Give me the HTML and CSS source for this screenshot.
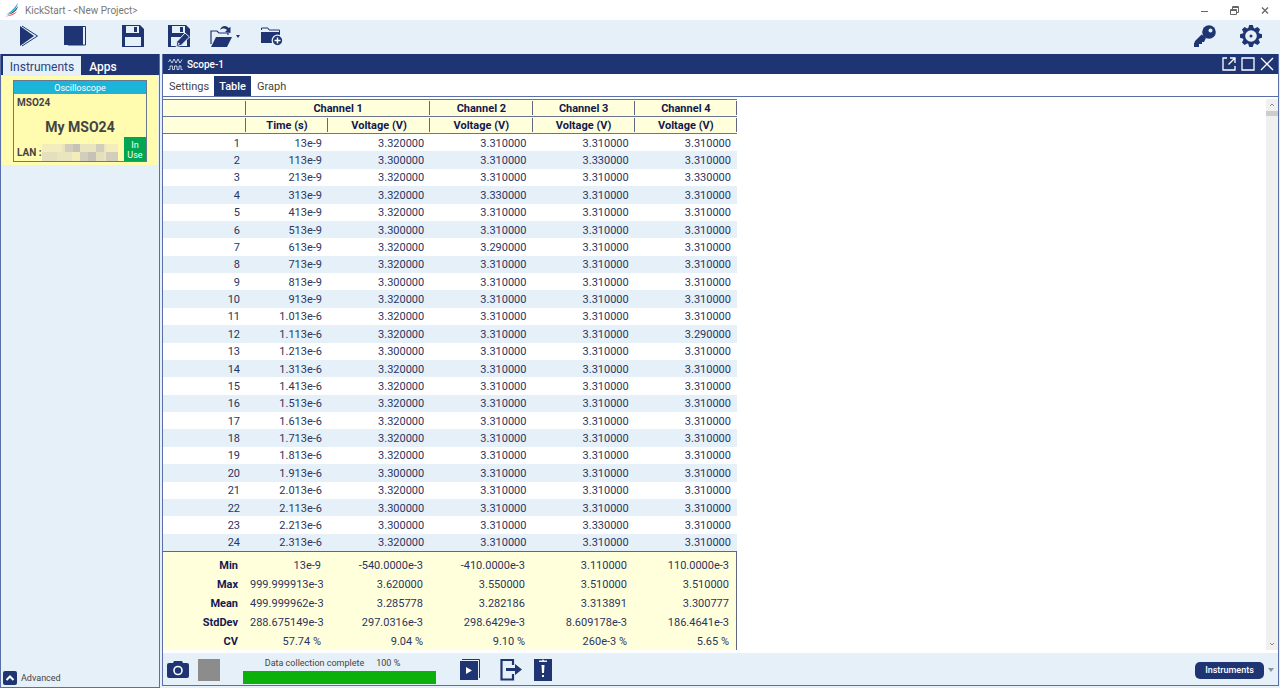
FILE: index.html
```html
<!DOCTYPE html>
<html lang="en">
<head>
    <meta charset="UTF-8">
    <meta name="viewport" content="width=device-width, initial-scale=1.0">
    <title>KickStart - &lt;New Project&gt;</title>
    <link rel="stylesheet" href="styles.css">
</head>
<body>

<header class="titlebar">
    <svg class="logo" width="14" height="14" viewBox="0 0 14 14"><path d="M13 0C12 5 8 10 2 11C7 8 9 5 13 0Z" fill="#27b4dc"/><path d="M13 3C12 8 8 11 0 12.500C6 10.500 10 8 13 3Z" fill="#26314a"/><path d="M12 8C10 12 6 13 0 13.500C5 12 9 11 12 8Z" fill="#e8504c"/></svg>
    <span class="title">KickStart - &lt;New Project&gt;</span>
    <div class="window-buttons">
        <button aria-label="Minimize"><svg width="10" height="10" viewBox="0 0 10 10"><path d="M1 6.500H8" stroke="#666" stroke-width="1"/></svg></button>
        <button aria-label="Restore"><svg width="10" height="10" viewBox="0 0 10 10" fill="none" stroke="#666"><path d="M0.500 4.500H6.500V9.500H0.500ZM0 5.500H7M2.500 4V1.500H8.500V7.500H7M2 2.500H9"/></svg></button>
        <button aria-label="Close"><svg width="10" height="10" viewBox="0 0 10 10"><path d="M2 2.500L8 8.500M8 2.500L2 8.500" stroke="#666" stroke-width="1.300"/></svg></button>
    </div>
</header>

<nav class="toolbar">
    <button class="tool play" aria-label="Run"><svg width="22" height="22" viewBox="0 0 22 22"><path d="M2 1L16 11L2 21Z" fill="#1f3473"/><path d="M4 1L19.500 11L4 21" fill="none" stroke="#1f3473" stroke-width="1"/></svg></button>
    <button class="tool stop" aria-label="Stop"><svg width="22" height="22" viewBox="0 0 22 22"><path d="M0 1H19V20H0Z" fill="#1f3473"/><path d="M2 1.500H21.500V20H4" fill="none" stroke="#1f3473" stroke-width="1"/></svg></button>
    <button class="tool save" aria-label="Save"><svg width="22" height="22" viewBox="0 0 22 22"><path fill-rule="evenodd" d="M0 0H18L22 4V22H0ZM4 1V8H17V1ZM3 12V21H19V12Z" fill="#1f3473"/><path d="M12 2H15V7H12Z" fill="#1f3473"/></svg></button>
    <button class="tool save-as" aria-label="Save as"><svg width="22" height="22" viewBox="0 0 22 22"><path fill-rule="evenodd" d="M0 0H18L22 4V22H0ZM4 1V8H17V1ZM3 12V21H19V12Z" fill="#1f3473"/><path d="M12 2H15V7H12Z" fill="#1f3473"/><path d="M8 21.500L9 16.500L17 8L21.500 12L13 20.500Z" fill="#1f3473" stroke="#e5f0f9"/><path d="M9.500 20L10.500 17.500L12 19Z" fill="#e5f0f9"/></svg></button>
    <button class="tool open" aria-label="Open"><svg width="30" height="22" viewBox="0 0 30 22"><path d="M1 19V6H7L9 8H18V10" fill="none" stroke="#1f3473" stroke-width="1.200"/><path d="M6 12H22L17 22H1Z" fill="#1f3473"/><path d="M10 5C11 0 17 0 18.500 3L20.500 2V8L15 7L17 5C15 3 12 3 10 5Z" fill="#1f3473"/><path d="M26 10H30L28 13Z" fill="#1f3473"/></svg></button>
    <button class="tool add-folder" aria-label="Add folder"><svg width="24" height="22" viewBox="0 0 24 22"><path d="M1.500 5V3H8L9 5H19.500V7" fill="none" stroke="#1f3473"/><path d="M1 7H20V18H1Z" fill="#1f3473"/><circle cx="17.500" cy="15.500" r="5.300" fill="#1f3473" stroke="#e5f0f9" stroke-width="1.300"/><path d="M14.500 15.500H20.500M17.500 12.500V18.500" stroke="#fff" stroke-width="1.500"/></svg></button>
    <button class="tool key" aria-label="License"><svg width="22" height="22" viewBox="0 0 22 22"><path d="M9 11L2 18" stroke="#1f3473" stroke-width="4"/><path d="M0 18V22H5V19H8V17H10L12 13L9 10Z" fill="#1f3473"/><circle cx="15" cy="7" r="6.800" fill="#1f3473"/><circle cx="16.500" cy="5.500" r="2" fill="#e5f0f9"/></svg></button>
    <button class="tool gear" aria-label="Options"><svg width="22" height="22" viewBox="-11 -11 22 22"><g fill="#1f3473"><circle r="8.300"/><path d="M-3 -7L-1.800 -11H1.800L3 -7V7L1.800 11H-1.800L-3 7ZM-7 -3L-11 -1.800V1.800L-7 3H7L11 1.800V-1.800L7 -3Z"/><path d="M-3 -7L-1.800 -11H1.800L3 -7V7L1.800 11H-1.800L-3 7ZM-7 -3L-11 -1.800V1.800L-7 3H7L11 1.800V-1.800L7 -3Z" transform="rotate(45)"/></g><circle r="5.800" fill="#e5f0f9"/><circle r="1.500" fill="#1f3473"/></svg></button>
</nav>

<main class="workspace">
    <aside class="sidebar">
        <div class="side-tabs">
            <button class="side-tab active">Instruments</button>
            <button class="side-tab">Apps</button>
        </div>
        <div class="instrument-slot">
            <div class="instrument">
                <div class="kind">Oscilloscope</div>
                <div class="model">MSO24</div>
                <div class="name">My MSO24</div>
                <div class="connection">
                    <span>LAN :</span>
                    <svg class="address" width="76" height="17" viewBox="0 0 76 17"><path d="M0 0H76V17H0Z" fill="#e9e5bf"/><path d="M0 0H20V8H0ZM30 8H38V17H30ZM64 0H76V8H64Z" fill="#f2edbb"/><path d="M23 0H31V8H23ZM38 8H46V17H38ZM54 0H62V8H54ZM64 8H76V17H64Z" fill="#d2cebb"/><path d="M31 0H38V8H31ZM46 8H54V17H46Z" fill="#c6c2b6"/><path d="M0 8H15V17H0ZM54 8H62V17H54Z" fill="#e4e0bd"/></svg>
                    <span class="in-use">In Use</span>
                </div>
            </div>
        </div>
        <div class="advanced">
            <button aria-label="Expand advanced" id="advanced"><svg width="14" height="14" viewBox="0 0 14 14"><path d="M3.500 9L7 5.500L10.500 9" fill="none" stroke="#fff" stroke-width="2"/></svg></button>
            <label for="advanced">Advanced</label>
        </div>
    </aside>

    <section class="scope">
        <div class="scope-header">
            <svg width="15" height="13" viewBox="0 0 15 13" fill="none" stroke="#e5f0f9" stroke-width="0.800"><path d="M0.500 4L2 1.500L4 5L6 1L8 5L10 1L12 5L14 1.500"/><path d="M0 11.500H2V8H4.500V11.500H6.500V8H9V11.500H11V8H13V11.500H14.500"/></svg>
            <h1>Scope-1</h1>
            <div class="scope-buttons">
                <button aria-label="Pop out"><svg width="14" height="14" viewBox="0 0 14 14" fill="none" stroke="#fff" stroke-width="1.300"><path d="M5 1H1V13H13V9M8 1H13V6M13 1L6.500 7.500"/></svg></button>
                <button aria-label="Maximize"><svg width="14" height="14" viewBox="0 0 14 14"><path d="M1 1H13V13H1Z" fill="none" stroke="#fff" stroke-width="1.300"/></svg></button>
                <button aria-label="Close scope"><svg width="14" height="14" viewBox="0 0 14 14"><path d="M1 1L13 13M13 1L1 13" stroke="#fff" stroke-width="1.300"/></svg></button>
            </div>
        </div>
        <div class="view-tabs">
            <button class="view-tab">Settings</button>
            <button class="view-tab active">Table</button>
            <button class="view-tab">Graph</button>
        </div>

        <div class="content">
            <div class="tables">
                <div class="readings-wrap">
                <table class="readings">
                    <colgroup><col class="c-index"><col class="c-time"><col class="c-volt"><col class="c-volt"><col class="c-volt"><col class="c-volt"></colgroup>
                    <thead>
                        <tr><th></th><th colspan="2">Channel 1</th><th>Channel 2</th><th>Channel 3</th><th>Channel 4</th></tr>
                        <tr><th></th><th>Time (s)</th><th>Voltage (V)</th><th>Voltage (V)</th><th>Voltage (V)</th><th>Voltage (V)</th></tr>
                    </thead>
                    <tbody>
                        <tr><td>1</td><td>13e-9</td><td>3.320000</td><td>3.310000</td><td>3.310000</td><td>3.310000</td></tr>
                        <tr><td>2</td><td>113e-9</td><td>3.300000</td><td>3.310000</td><td>3.330000</td><td>3.310000</td></tr>
                        <tr><td>3</td><td>213e-9</td><td>3.320000</td><td>3.310000</td><td>3.310000</td><td>3.330000</td></tr>
                        <tr><td>4</td><td>313e-9</td><td>3.320000</td><td>3.330000</td><td>3.310000</td><td>3.310000</td></tr>
                        <tr><td>5</td><td>413e-9</td><td>3.320000</td><td>3.310000</td><td>3.310000</td><td>3.310000</td></tr>
                        <tr><td>6</td><td>513e-9</td><td>3.300000</td><td>3.310000</td><td>3.310000</td><td>3.310000</td></tr>
                        <tr><td>7</td><td>613e-9</td><td>3.320000</td><td>3.290000</td><td>3.310000</td><td>3.310000</td></tr>
                        <tr><td>8</td><td>713e-9</td><td>3.320000</td><td>3.310000</td><td>3.310000</td><td>3.310000</td></tr>
                        <tr><td>9</td><td>813e-9</td><td>3.300000</td><td>3.310000</td><td>3.310000</td><td>3.310000</td></tr>
                        <tr><td>10</td><td>913e-9</td><td>3.320000</td><td>3.310000</td><td>3.310000</td><td>3.310000</td></tr>
                        <tr><td>11</td><td>1.013e-6</td><td>3.320000</td><td>3.310000</td><td>3.310000</td><td>3.310000</td></tr>
                        <tr><td>12</td><td>1.113e-6</td><td>3.320000</td><td>3.310000</td><td>3.310000</td><td>3.290000</td></tr>
                        <tr><td>13</td><td>1.213e-6</td><td>3.300000</td><td>3.310000</td><td>3.310000</td><td>3.310000</td></tr>
                        <tr><td>14</td><td>1.313e-6</td><td>3.320000</td><td>3.310000</td><td>3.310000</td><td>3.310000</td></tr>
                        <tr><td>15</td><td>1.413e-6</td><td>3.320000</td><td>3.310000</td><td>3.310000</td><td>3.310000</td></tr>
                        <tr><td>16</td><td>1.513e-6</td><td>3.320000</td><td>3.310000</td><td>3.310000</td><td>3.310000</td></tr>
                        <tr><td>17</td><td>1.613e-6</td><td>3.320000</td><td>3.310000</td><td>3.310000</td><td>3.310000</td></tr>
                        <tr><td>18</td><td>1.713e-6</td><td>3.320000</td><td>3.310000</td><td>3.310000</td><td>3.310000</td></tr>
                        <tr><td>19</td><td>1.813e-6</td><td>3.320000</td><td>3.310000</td><td>3.310000</td><td>3.310000</td></tr>
                        <tr><td>20</td><td>1.913e-6</td><td>3.300000</td><td>3.310000</td><td>3.310000</td><td>3.310000</td></tr>
                        <tr><td>21</td><td>2.013e-6</td><td>3.320000</td><td>3.310000</td><td>3.310000</td><td>3.310000</td></tr>
                        <tr><td>22</td><td>2.113e-6</td><td>3.300000</td><td>3.310000</td><td>3.310000</td><td>3.310000</td></tr>
                        <tr><td>23</td><td>2.213e-6</td><td>3.300000</td><td>3.310000</td><td>3.330000</td><td>3.310000</td></tr>
                        <tr><td>24</td><td>2.313e-6</td><td>3.320000</td><td>3.310000</td><td>3.310000</td><td>3.310000</td></tr>
                    </tbody>
                </table>
                </div>
                <div class="stats-wrap">
                    <table class="stats">
                        <colgroup><col class="c-index"><col class="c-time"><col class="c-volt"><col class="c-volt"><col class="c-volt"><col class="c-volt"></colgroup>
                        <tbody>
                            <tr><th>Min</th><td>13e-9</td><td>-540.0000e-3</td><td>-410.0000e-3</td><td>3.110000</td><td>110.0000e-3</td></tr>
                            <tr><th>Max</th><td>999.999913e-3</td><td>3.620000</td><td>3.550000</td><td>3.510000</td><td>3.510000</td></tr>
                            <tr><th>Mean</th><td>499.999962e-3</td><td>3.285778</td><td>3.282186</td><td>3.313891</td><td>3.300777</td></tr>
                            <tr><th>StdDev</th><td>288.675149e-3</td><td>297.0316e-3</td><td>298.6429e-3</td><td>8.609178e-3</td><td>186.4641e-3</td></tr>
                            <tr><th>CV</th><td>57.74 %</td><td>9.04 %</td><td>9.10 %</td><td>260e-3 %</td><td>5.65 %</td></tr>
                        </tbody>
                    </table>
                </div>
            </div>
            <div class="scrollbar">
                <button aria-label="Scroll up"><svg width="8" height="8" viewBox="0 0 8 8"><path d="M2 5L4 3L6 5" fill="none" stroke="#888"/></svg></button>
                <div class="thumb"></div>
                <button class="down" aria-label="Scroll down"><svg width="8" height="8" viewBox="0 0 8 8"><path d="M2 3L4 5L6 3" fill="none" stroke="#888"/></svg></button>
            </div>
        </div>

        <footer class="statusbar">
            <button class="camera" aria-label="Screenshot"><svg width="22" height="20" viewBox="0 0 22 20"><path d="M2 3H6L7 1H15L16 3H20Q22 3 22 5V16Q22 18 20 18H2Q0 18 0 16V5Q0 3 2 3Z" fill="#1f3473"/><circle cx="11" cy="10.500" r="4" fill="none" stroke="#fff" stroke-width="1.600"/></svg></button>
            <button class="swatch" aria-label="Stop collection"></button>
            <div class="progress">
                <div class="progress-text"><span>Data collection complete</span><span>100 %</span></div>
                <div class="progress-bar"></div>
            </div>
            <button class="playback" aria-label="Playback"><svg width="22" height="24" viewBox="0 0 22 24"><path d="M0 3H18V22H0Z" fill="#1f3473"/><path d="M2 1.500H19.500V20" fill="none" stroke="#1f3473"/><path d="M6 9L12 12.500L6 16Z" fill="#fff"/></svg></button>
            <button class="export" aria-label="Export"><svg width="22" height="24" viewBox="0 0 22 24"><path d="M13 7V2H1.500V21.500H13V16" fill="none" stroke="#1f3473" stroke-width="2.200"/><path d="M6 10H15V6L22 11.500L15 17V13H6Z" fill="#1f3473"/></svg></button>
            <button class="log" aria-label="Event log"><svg width="18" height="24" viewBox="0 0 18 24"><path d="M0 1H18V23H0Z" fill="#1f3473"/><path d="M5 4V2.500H8L9 1L10 2.500H13V4Z" fill="#e5f0f9"/><path d="M7.500 7H10.500L10 15H8ZM8 17H10V19H8Z" fill="#fff"/></svg></button>
            <button class="instruments-button">Instruments</button>
            <button class="more" aria-label="More"><svg width="6" height="6" viewBox="0 0 6 6"><path d="M0 1H6L3 5Z" fill="#8d939c"/></svg></button>
        </footer>
    </section>
</main>

</body>
</html>
```
FILE: styles.css
```css
* { box-sizing: border-box; }
body {
    margin: 0;
    height: 100vh;
    display: flex;
    flex-direction: column;
    background: #e5f0f9;
    color: #444;
    font-family: Roboto, sans-serif;
    font-size: 11px;
}
button {
    padding: 0;
    border: none;
    background: none;
    font-family: inherit;
    font-size: inherit;
    color: inherit;
    cursor: pointer;
}
svg { display: block; }

.titlebar {
    height: 20px;
    display: flex;
    align-items: center;
    background: #fff;
    padding: 0 10px 0 5px;
}
.title { margin-left: 6px; font-size: 10px; color: #777; }
.window-buttons { display: flex; gap: 20px; margin-left: auto; }

.toolbar {
    height: 34px;
    display: flex;
    align-items: center;
    padding: 0 18px 2px;
}
.stop { margin-left: 24px; }
.save { margin-left: 36px; }
.save-as { margin-left: 24px; }
.open { margin-left: 20px; }
.add-folder { margin-left: 20px; }
.key { margin-left: auto; }
.gear { margin-left: 24px; }

.workspace {
    flex: 1;
    min-height: 0;
    display: flex;
    gap: 2px;
    padding-right: 1px;
}

.sidebar {
    width: 160px;
    display: flex;
    flex-direction: column;
    border: 1px solid #5a6ea8;
    border-top: none;
}
.side-tabs {
    height: 21px;
    display: flex;
    background: #1f3473;
    padding: 2px 0 0 2px;
}
.side-tab {
    width: 78px;
    padding-top: 2px;
    font-size: 12px;
    color: #fff;
}
.side-tab + .side-tab { width: 44px; font-weight: 500; }
.side-tab.active { background: #e5f0f9; color: #2d4180; }
.instrument-slot {
    background: #fffcb0;
    margin: 1px 1px 0;
    padding: 4px 11px 3px;
}
.instrument { border: 1px solid #66798f; }
.kind {
    height: 13px;
    line-height: 14px;
    background: #1cb4d8;
    color: #fff;
    font-size: 9px;
    text-align: center;
}
.model { padding: 3px 3px 0; font-size: 10px; font-weight: 700; line-height: 12px; }
.name { padding-top: 8px; font-size: 14px; font-weight: 700; line-height: 20px; text-align: center; }
.connection {
    height: 24px;
    display: flex;
    align-items: flex-end;
    padding-left: 3px;
    font-size: 10px;
    font-weight: 700;
    line-height: 16px;
}
.in-use {
    width: 22px;
    height: 24px;
    margin-left: auto;
    padding-top: 3px;
    background: #00a651;
    color: #fff;
    font-size: 9px;
    font-weight: 400;
    line-height: 10px;
    text-align: center;
}
.advanced {
    margin-top: auto;
    display: flex;
    align-items: center;
    gap: 4px;
    padding: 0 0 2px 2px;
    font-size: 9px;
}
.advanced button { background: #1f3473; border-radius: 2px; }

.scope {
    flex: 1;
    min-width: 0;
    display: flex;
    flex-direction: column;
    margin-bottom: 2px;
    background: #fff;
    border: 1px solid #5a6ea8;
    border-top: none;
}
.scope-header {
    height: 20px;
    display: flex;
    align-items: center;
    gap: 4px;
    padding: 0 4px 0 5px;
    background: #1f3473;
    color: #fff;
}
.scope-header h1 { margin: 0; font-size: 10px; font-weight: 500; }
.scope-buttons { display: flex; gap: 5px; margin-left: auto; }
.view-tabs {
    height: 23px;
    display: flex;
    padding-top: 2px;
    border-bottom: 1px solid #5a6ea8;
}
.view-tab { padding: 0 5px 0 6px; font-size: 11px; }
.view-tab.active { padding: 0 5px; background: #1f3473; color: #fff; font-weight: 500; }

.content {
    flex: 1;
    min-height: 0;
    display: flex;
    padding: 2px 0 3px;
}
.tables { width: 574px; display: flex; flex-direction: column; }
.readings-wrap { flex: 1; min-height: 0; }
table {
    width: 100%;
    height: 100%;
    table-layout: fixed;
    border-collapse: separate;
    border-spacing: 0;
    color: #2c3560;
}
.c-index { width: 83px; }
.c-time { width: 82px; }
td { padding: 1px 6px 0 4px; text-align: right; white-space: nowrap; line-height: 13px; }
th { padding: 0; font-weight: 700; line-height: 13px; color: #14184f; }
.readings thead tr { height: 17px; }
.readings thead th {
    height: 17px;
    background: linear-gradient(#5f6686, #5f6686) no-repeat right center / 1px 14px #ffffdc;
    border-bottom: 1px solid #6c7390;
}
.readings thead tr:first-child th { border-top: 1px solid #6c7390; height: 18px; }
.readings tbody tr:nth-child(even) { background: #e5f0f9; }
.stats-wrap {
    height: 99px;
    padding-top: 3px;
    background: #ffffdc;
    border-top: 1px solid #5f6686;
    border-right: 1px solid #5f6686;
}
.stats th { padding: 1px 8px 0 0; text-align: right; }
.stats td { padding-right: 7px; }
.scrollbar {
    width: 12px;
    margin-left: auto;
    display: flex;
    flex-direction: column;
    background: #f0f0f0;
}
.scrollbar button { height: 12px; display: flex; align-items: center; justify-content: center; }
.scrollbar .down { margin-top: auto; }
.thumb { height: 5px; background: #cdcdcd; }

.statusbar {
    height: 32px;
    display: flex;
    align-items: center;
    padding: 2px 4px 0;
    background: #e5f0f9;
}
.swatch { width: 22px; height: 22px; margin-left: 9px; background: #8c8c8c; }
.progress { width: 193px; margin-left: 23px; }
.progress-text {
    display: flex;
    justify-content: center;
    gap: 12px;
    padding-right: 14px;
    font-size: 9px;
    line-height: 12px;
    padding-bottom: 2px;
}
.progress-bar { height: 13px; background: #0bb00b; }
.playback { margin-left: 24px; }
.export { margin-left: 18px; }
.log { margin-left: 12px; }
.instruments-button {
    width: 69px;
    height: 17px;
    margin-left: auto;
    background: #1f3473;
    border-radius: 5px;
    color: #fff;
    font-size: 9px;
    font-weight: 500;
}
.more { margin-left: 4px; }
```
